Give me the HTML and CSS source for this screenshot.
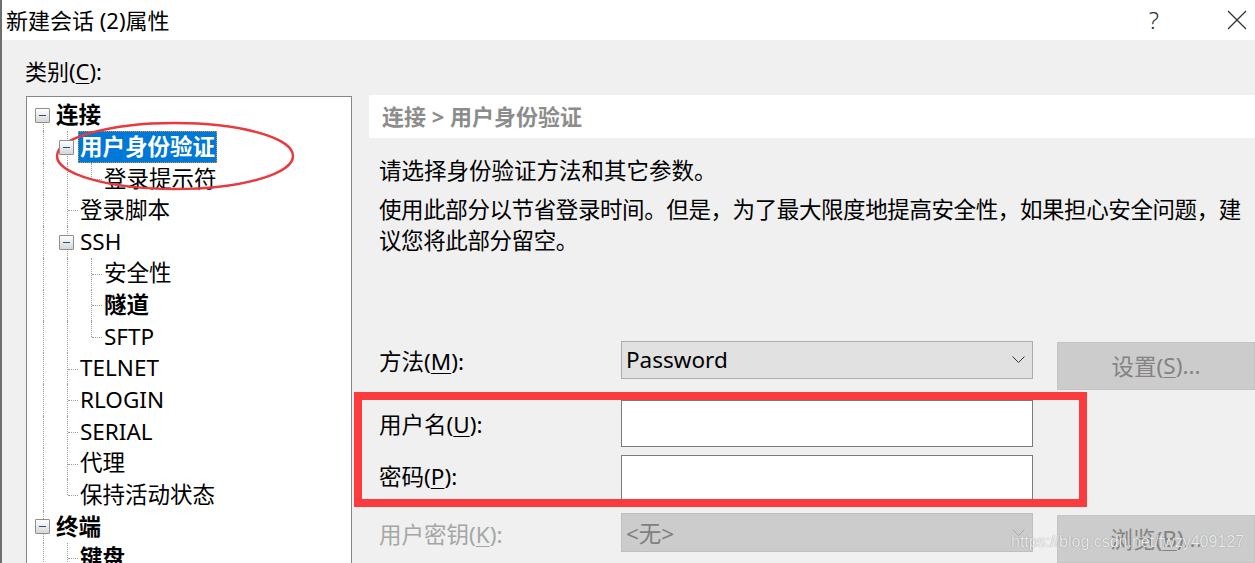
FILE: index.html
```html
<!DOCTYPE html>
<html lang="zh-CN">
<head>
<meta charset="utf-8">
<title>新建会话 (2)属性</title>
<link rel="stylesheet" href="styles.css">
</head>
<body>
<div class="window">
  <div class="titlebar">
    <span class="title">新建会话 (2)属性</span>
    <span class="help">?</span>
    <svg class="close" viewBox="0 0 20 20"><path d="M1 1 L19 19 M19 1 L1 19" stroke="#333" stroke-width="1.3" fill="none"/></svg>
  </div>
  <div class="content">
    <div class="left">
      <div class="cat-label">类别(<u>C</u>):</div>
      <div class="tree">
        <div class="row"><span class="g exp down"><i></i></span><span class="lbl-t b">连接</span></div>
        <div class="row"><span class="g v"></span><span class="g exp up down"><i></i></span><span class="lbl-t b sel">用户身份验证</span></div>
        <div class="row"><span class="g v"></span><span class="g v"></span><span class="g l"></span><span class="lbl-t">登录提示符</span></div>
        <div class="row"><span class="g v"></span><span class="g t"></span><span class="lbl-t">登录脚本</span></div>
        <div class="row"><span class="g v"></span><span class="g exp up down"><i></i></span><span class="lbl-t">SSH</span></div>
        <div class="row"><span class="g v"></span><span class="g v"></span><span class="g t"></span><span class="lbl-t">安全性</span></div>
        <div class="row"><span class="g v"></span><span class="g v"></span><span class="g t"></span><span class="lbl-t b">隧道</span></div>
        <div class="row"><span class="g v"></span><span class="g v"></span><span class="g l"></span><span class="lbl-t">SFTP</span></div>
        <div class="row"><span class="g v"></span><span class="g t"></span><span class="lbl-t">TELNET</span></div>
        <div class="row"><span class="g v"></span><span class="g t"></span><span class="lbl-t">RLOGIN</span></div>
        <div class="row"><span class="g v"></span><span class="g t"></span><span class="lbl-t">SERIAL</span></div>
        <div class="row"><span class="g v"></span><span class="g t"></span><span class="lbl-t">代理</span></div>
        <div class="row"><span class="g v"></span><span class="g l"></span><span class="lbl-t">保持活动状态</span></div>
        <div class="row"><span class="g exp up down"><i></i></span><span class="lbl-t b">终端</span></div>
        <div class="row"><span class="g v"></span><span class="g t"></span><span class="lbl-t b">键盘</span></div>
      </div>
    </div>
    <div class="right">
      <div class="crumb">连接 &gt; 用户身份验证</div>
      <p class="desc">请选择身份验证方法和其它参数。</p>
      <p class="desc second">使用此部分以节省登录时间。但是，为了最大限度地提高安全性，如果担心安全问题，建议您将此部分留空。</p>
      <div class="form">
        <div class="lbl r1">方法(<u>M</u>):</div>
        <div class="combo r1c"><span>Password</span><svg class="chev" viewBox="0 0 13 7"><path d="M0.5 0.5 L6.5 6.5 L12.5 0.5" stroke="#333" stroke-width="1" fill="none"/></svg></div>
        <div class="btn r1b">设置(<u>S</u>)...</div>

        <div class="lbl r2">用户名(<u>U</u>):</div>
        <div class="input r2c"></div>

        <div class="lbl r3">密码(<u>P</u>):</div>
        <div class="input r3c"></div>

        <div class="lbl r4 dis">用户密钥(<u>K</u>):</div>
        <div class="combo dis r4c"><span>&lt;无&gt;</span><svg class="chev" viewBox="0 0 13 7"><path d="M0.5 0.5 L6.5 6.5 L12.5 0.5" stroke="#a8a8a8" stroke-width="1" fill="none"/></svg></div>
        <div class="btn r4b">浏览(<u>B</u>)...</div>
      </div>
    </div>
  </div>
</div>
<svg class="ellipse" viewBox="0 0 320 210" width="320" height="210"><ellipse cx="175" cy="156" rx="118" ry="33" fill="none" stroke="#e8393e" stroke-width="2.5"/></svg>
<div class="redbox"></div>
<div class="wm">https://blog.csdn.net/fwzy409127</div>
</body>
</html>
```
FILE: styles.css
```css
* { box-sizing: border-box; }
html, body { margin: 0; padding: 0; }
body {
  width: 1255px;
  height: 563px;
  overflow: hidden;
  font-family: "Noto Sans", "Noto Sans CJK SC", sans-serif;
  color: #000;
  background: #f0f0f0;
}
u { text-decoration-thickness: 1px; text-underline-offset: 3px; }

.window {
  width: 1255px;
  height: 563px;
  border-left: 2px solid #6f6f6f;
  display: flex;
  flex-direction: column;
}
.titlebar {
  height: 40px;
  flex: none;
  background: #fff;
  display: flex;
  align-items: center;
  padding-left: 4px;
}
.title { font-size: 22px; line-height: 1; }
.help {
  margin-left: auto;
  font-size: 24px;
  font-weight: 300;
  color: #333;
  line-height: 1;
}
.close { margin-left: 68px; margin-right: 8px; width: 20px; height: 20px; }

.content {
  flex: 1;
  min-height: 0;
  display: flex;
  padding: 16px 0 0 23px;
  background: #f0f0f0;
}
.left { width: 327px; flex: none; display: flex; flex-direction: column; }
.cat-label { font-size: 22px; line-height: 30px; margin-bottom: 10px; }
.tree {
  margin-left: 1px;
  flex: 1;
  background: #fff;
  border: 1px solid #828790;
  border-bottom: none;
  padding: 2.7px 0 0 3px;
}
.row { display: flex; height: 31.65px; align-items: stretch; }
.g { width: 24px; flex: none; position: relative; }
.g.v::before, .g.t::before, .g.l::before, .g.exp.up::before, .g.exp.down::after {
  content: "";
  position: absolute;
  left: 13px;
  border-left: 1px dotted #9a9a9a;
}
.g.v::before, .g.t::before { top: 0; bottom: 0; }
.g.l::before { top: 0; height: 50%; }
.g.t::after, .g.l::after {
  content: "";
  position: absolute;
  left: 14px;
  right: 0;
  top: 50%;
  border-top: 1px dotted #9a9a9a;
}
.g.exp.up::before { top: 0; height: 50%; }
.g.exp.down::after { top: 50%; bottom: 0; }
.g.exp i {
  position: absolute;
  z-index: 1;
  left: 5px;
  top: 50%;
  margin-top: -7.5px;
  width: 15px;
  height: 15px;
  border: 1px solid #8e8e8e;
  border-radius: 1px;
  background: linear-gradient(#ffffff, #d6d6d6);
}
.g.exp i::after {
  content: "";
  position: absolute;
  left: 3px;
  right: 3px;
  top: 6px;
  height: 1px;
  background: #2c4a8e;
}
.lbl-t {
  font-size: 22.5px;
  line-height: 1;
  padding: 0 2px;
  display: flex;
  align-items: center;
  white-space: nowrap;
}
.lbl-t.b { font-weight: 700; }
.lbl-t.sel {
  background: #0078d7;
  color: #fff;
  border: 1px dotted #d9943a;
  padding: 0 1px;
}

.right { margin-left: 17px; margin-top: 39px; flex: none; width: 886px; }
.crumb {
  height: 43px;
  background: #fff;
  padding-left: 13px;
  font-size: 22px;
  font-weight: 700;
  color: #8c8c8c;
  line-height: 43px;
}
.desc {
  margin: 17px 0 0 10px;
  width: 866px;
  font-size: 22.5px;
  line-height: 31px;
}
.desc.second { margin-top: 8px; letter-spacing: -0.4px; }

.form {
  margin: 84.5px 0 0 10px;
  display: grid;
  grid-template-columns: 242px 436px 198px;
  grid-template-rows: 59px 55px 58px 50px;
}
.lbl {
  grid-column: 1;
  align-self: start;
  font-size: 22.5px;
  line-height: 31px;
  white-space: nowrap;
}
.lbl.r1 { margin-top: 5.5px; }
.lbl.r2 { margin-top: 9.5px; }
.lbl.r3 { margin-top: 6.5px; }
.lbl.r4 { margin-top: 6.5px; }
.lbl.dis { color: #a6a6a6; }

.combo {
  grid-column: 2;
  align-self: start;
  width: 412px;
  height: 38px;
  border: 1px solid #adadad;
  background: #e1e1e1;
  display: flex;
  align-items: center;
  padding: 0 7px 0 4px;
  font-size: 22.5px;
}
.combo.dis { background: #cccccc; border-color: #bfbfbf; color: #7f7f7f; height: 39px; }
.chev { margin-left: auto; width: 13px; height: 7px; }
.input {
  grid-column: 2;
  align-self: start;
  width: 412px;
  background: #fff;
  border: 1px solid #7a7a7a;
}
.r2c { height: 47px; }
.r3c { height: 45px; }
.btn {
  grid-column: 3;
  align-self: start;
  width: 198px;
  height: 48px;
  background: #cccccc;
  border: 1px solid #c4c4c4;
  color: #838383;
  font-size: 22.5px;
  display: flex;
  align-items: center;
  justify-content: center;
}
.r1b { margin-top: 1px; }
.r4b { margin-top: 2px; }

.ellipse { position: absolute; left: 0; top: 0; pointer-events: none; }
.redbox {
  position: absolute;
  left: 354px;
  top: 392px;
  width: 733px;
  height: 115px;
  border: 8px solid #fc3b3f;
  pointer-events: none;
}
.wm {
  position: absolute;
  left: 1011px;
  top: 532px;
  font-family: "Liberation Sans", Arial, sans-serif;
  font-size: 16px;
  line-height: 20px;
  color: rgba(255, 255, 255, 0.85);
  text-shadow: 0 0 1px rgba(0, 0, 0, 0.45);
  white-space: nowrap;
}
```
